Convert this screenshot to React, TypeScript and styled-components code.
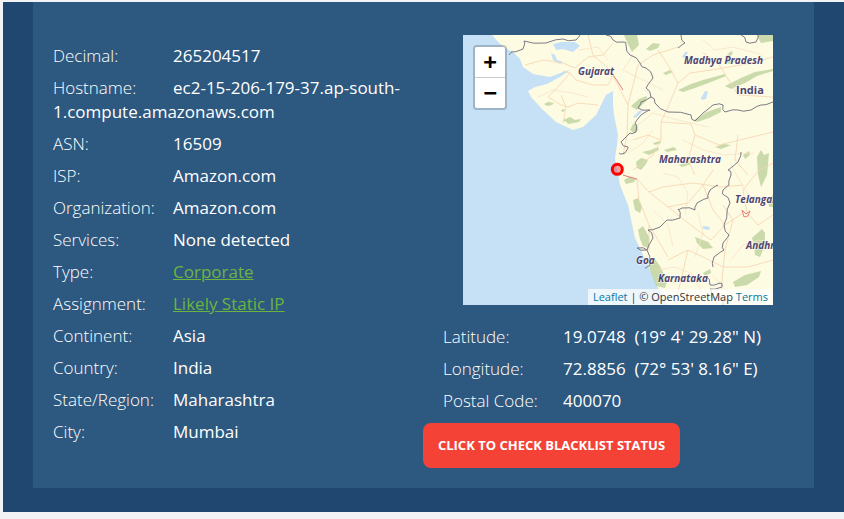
import styled, { createGlobalStyle } from 'styled-components';

const GlobalStyle = createGlobalStyle`
  html, body {
    margin: 0;
    padding: 0;
    background: #f2f3f5;
    overflow: hidden;
  }
`;

type Detail = { label: string; value: string; link?: boolean };

const leftRows: Detail[] = [
    { label: 'Decimal:', value: '265204517' },
    { label: 'Hostname:', value: 'ec2-15-206-179-37.ap-south-1.compute.amazonaws.com' },
    { label: 'ASN:', value: '16509' },
    { label: 'ISP:', value: 'Amazon.com' },
    { label: 'Organization:', value: 'Amazon.com' },
    { label: 'Services:', value: 'None detected' },
    { label: 'Type:', value: 'Corporate', link: true },
    { label: 'Assignment:', value: 'Likely Static IP', link: true },
    { label: 'Continent:', value: 'Asia' },
    { label: 'Country:', value: 'India' },
    { label: 'State/Region:', value: 'Maharashtra' },
    { label: 'City:', value: 'Mumbai' },
];

const rightRows: Detail[] = [
    { label: 'Latitude:', value: '19.0748\u00a0\u00a0(19° 4\' 29.28" N)' },
    { label: 'Longitude:', value: '72.8856\u00a0\u00a0(72° 53\' 8.16" E)' },
    { label: 'Postal Code:', value: '400070' },
];

// Everything below is in map pixels, 0,0 is the top left of the 310x270 tile area
const LAND =
    '29,0 36,8 46,15 50,17 57,24 60,32 70,39 87,42 100,37 107,35 97,42 84,49 72,52 65,56 68,62 80,75 93,87 110,95 120,92 133,80 138,70 143,60 150,56 150,70 151,80 155,100 154,110 152,123 154,134 157,150 165,170 172,203 185,230 195,253 205,270 310,270 310,0';

const WATER = [
    '90,9 98,7 112,7 117,11 110,17 100,14 93,15',
    '88,18 92,20 94,25 100,27 97,29 90,25',
    '238,63 242,56 245,57 243,64 239,65',
    '170,82 176,76 180,75 177,79 172,83',
    '219,22 222,17 225,17 222,23',
    '240,191 247,192 246,195 240,194',
];

const FOREST = [
    '100,85 107,82 112,85 118,84 116,87 106,89',
    '81,69 85,67 91,68 89,70 84,71',
    '98,75 101,74 102,76 99,77',
    '215,55 228,49 240,45 262,39 263,41 248,47 232,53 220,57',
    '262,51 278,43 292,37 310,34 310,36 294,41 282,48 268,54',
    '231,85 244,77 258,72 258,77 246,83 234,87',
    '183,14 190,8 197,9 195,13 187,16',
    '168,71 176,64 184,61 183,66 174,75',
    '167,95 170,89 174,89 175,95 171,98',
    '173,127 178,123 185,125 183,129 178,135 174,133',
    '161,145 166,142 173,144 171,147 163,149',
    '170,165 175,163 179,172 177,178 172,175',
    '175,195 180,191 186,202 186,213 180,211 177,204',
    '185,227 191,223 197,231 204,246 202,253 193,251 188,238',
    '289,203 299,194 302,198 302,210 297,222 292,220 291,210',
    '270,247 282,240 298,236 296,242 284,250 272,252',
    '179,117 188,115 195,112 196,115 186,120',
    '252,112 261,109 268,110 258,114',
    '201,115 211,112 214,115 204,117',
    '294,122 298,115 301,120 306,118 304,140 298,152 295,140',
    '262,27 271,23 274,26 266,29',
    '294,0 310,0 310,6 298,8',
    '161,0 174,0 176,10 169,17 165,9',
    '232,202 245,207 250,213 240,214 234,208',
    '200,38 207,35 210,37 203,40',
    '190,108 197,106 198,108 192,110',
    '216,130 226,127 228,129 219,132',
    '262,22 268,16 270,18 265,24',
    '240,238 247,234 248,238 242,241',
    '305,165 310,160 310,172 306,172',
    '280,120 286,116 287,120 282,124',
];

const ROADS = [
    '100,36 107,38 113,45 130,50 145,50 150,40',
    '107,38 95,52 85,62 98,70 105,72 115,68 135,70',
    '98,60 103,72 100,88',
    '62,30 80,25 100,28 112,33 125,22 140,20 150,8',
    '125,0 130,20 145,33 155,50 165,70 164,100 160,120',
    '165,70 170,50 175,30 190,20 215,12',
    '215,48 227,38 248,35 290,28 310,22',
    '215,48 205,72 198,87 198,105 190,120 170,135',
    '198,87 228,89 232,100 256,110 310,97',
    '215,48 205,30 195,15',
    '160,140 174,144 186,157 205,172 225,168 240,150 250,135',
    '174,144 176,165 186,190 186,215',
    '186,157 200,152 230,148 258,152 280,150',
    '205,172 225,188 248,205 262,190 280,178',
    '240,150 250,175 262,190',
    '205,225 225,215 240,222 260,232 285,232 310,225',
    '225,215 218,245 212,268',
    '260,170 270,185 262,215 258,255',
    '284,178 295,190 310,180',
    '284,178 280,155 296,135 310,128',
    '240,18 255,28 275,60 310,62',
    '170,105 185,100 198,105',
    '232,100 225,125 232,140',
    '275,100 272,125 285,140',
    '205,222 195,205 186,190',
];

const FINE_ROADS = [
    '75,62 90,55 110,58 125,62',
    '115,15 135,12 145,25',
    '175,90 190,78 215,85 245,92',
    '165,118 180,108 190,95',
    '220,105 240,115 262,120 290,118',
    '200,138 215,142 225,158 222,180',
    '190,175 205,190 210,212',
    '235,178 240,198 232,222',
    '195,235 212,232 228,238 240,258',
    '268,225 280,210 295,205 310,208',
    '268,130 285,160 300,165',
    '250,240 262,255 280,262',
    '240,5 252,15 270,12 300,20',
    '170,20 160,35 180,45 200,55',
];

const HIGHWAYS = ['150,40 155,47 160,55', '160,140 166,142 174,144', '279,175 283,179 287,176 285,181 281,182 279,175'];

const BORDERS = [
    '46,20 48,17 60,14 61,6 83,8 100,4 113,5 117,0',
    '143,0 150,5 160,7 163,10 167,20 177,28 183,33 190,43 183,53 188,62 178,67 175,73 187,75 178,80 172,88 173,97 167,98 158,107 165,112 162,118 156,118',
    '188,62 192,68 205,77 228,80 232,86 240,78 250,70 260,70 262,77 275,75 288,75 298,70 310,67',
    '215,13 222,8 218,0',
    '278,0 283,7 293,7 295,0',
    '278,117 275,127 265,135 268,140 266,150 260,155 261,160 267,168 264,178 261,190 266,200 260,208 261,215 251,222 250,232',
    '255,150 247,155 245,163 234,168 232,175 219,173 215,174 217,183 204,185 197,192 185,195 190,203 184,215 174,213 184,215 187,230 182,233',
    '243,241 247,250 257,248 259,252 247,254 248,262 258,262 260,270',
];

// State lines are crooked in the tiles, so every long stretch gets a small kink
function kink(points: string): string {
    const pts = points.split(' ').map((p) => p.split(',').map(Number));
    const out: string[] = [];
    pts.forEach(([x, y], i) => {
        out.push(`${x},${y}`);
        const next = pts[i + 1];
        if (!next) return;
        const side = i % 2 === 0 ? 1.2 : -1.2;
        out.push(`${(x + next[0]) / 2 + side},${(y + next[1]) / 2 - side}`);
    });
    return out.join(' ');
}

type MapLabel = { x: number; y: number; text: string; italic?: boolean; size?: number };

const MAP_LABELS: MapLabel[] = [
    { x: 115, y: 40, text: 'Gujarat', italic: true },
    { x: 221, y: 29, text: 'Madhya Pradesh', italic: true },
    { x: 273, y: 59, text: 'India', size: 11 },
    { x: 196, y: 128, text: 'Maharashtra', italic: true },
    { x: 272, y: 168, text: 'Telangana', italic: true },
    { x: 283, y: 214, text: 'Andhra', italic: true },
    { x: 173, y: 229, text: 'Goa', italic: true },
    { x: 195, y: 247, text: 'Karnataka', italic: true },
];

function MapPicture() {
    return (
        <MapSvg viewBox="0 0 310 270" width={310} height={270}>
            <defs>
                <filter id="tile-blur" x="0" y="0" width="100%" height="100%">
                    <feGaussianBlur stdDeviation="0.45" />
                </filter>
            </defs>
            <g filter="url(#tile-blur)">
                <polygon points={LAND} fill="#fdfbe2" />
                {WATER.map((p) => (
                    <polygon key={p} points={p} fill="#c6e0f6" />
                ))}
                {FOREST.map((p) => (
                    <polygon key={p} points={p} fill="#bdd29c" fillOpacity={0.8} />
                ))}
                {FINE_ROADS.map((p) => (
                    <polyline key={p} points={p} fill="none" stroke="#f8e0c4" strokeWidth={0.7} />
                ))}
                {ROADS.map((p) => (
                    <polyline key={p} points={p} fill="none" stroke="#f7d3ae" strokeWidth={0.8} />
                ))}
                {HIGHWAYS.map((p) => (
                    <polyline key={p} points={p} fill="none" stroke="#ec7f7a" strokeWidth={1} />
                ))}
                {BORDERS.map((p) => (
                    <polyline key={p} points={kink(p)} fill="none" stroke="#6f6b7e" strokeWidth={0.9} />
                ))}
            </g>
            {MAP_LABELS.map((l) => (
                <MapText key={l.text} x={l.x} y={l.y} $italic={l.italic} $size={l.size ?? 10}>
                    {l.text}
                </MapText>
            ))}
            <circle cx={154.3} cy={134.3} r={5} fill="#ff0000" fillOpacity={0.35} stroke="#ff0000" strokeWidth={3} />
        </MapSvg>
    );
}

function Row({ label, value, link }: Detail) {
    return (
        <InfoRow>
            <Label>{label}</Label>
            {link ? <ValueLink href="#">{value}</ValueLink> : <Value>{value}</Value>}
        </InfoRow>
    );
}

export default function App() {
    return (
        <>
            <GlobalStyle />
            <Outer>
                <Inner>
                    <LeftColumn>
                        {leftRows.map((r) => (
                            <Row key={r.label} {...r} />
                        ))}
                    </LeftColumn>
                    <RightColumn>
                        <MapFrame>
                            <MapPicture />
                            <ZoomControl>
                                <ZoomButton>+</ZoomButton>
                                <ZoomButton>−</ZoomButton>
                            </ZoomControl>
                            <Attribution>
                                <AttrLink>Leaflet</AttrLink> | © OpenStreetMap <AttrLink>Terms</AttrLink>
                            </Attribution>
                        </MapFrame>
                        <RightRows>
                            {rightRows.map((r) => (
                                <Row key={r.label} {...r} />
                            ))}
                        </RightRows>
                        <BlacklistButton>Click to check blacklist status</BlacklistButton>
                    </RightColumn>
                </Inner>
            </Outer>
        </>
    );
}

const Outer = styled.div`
  margin: 2px 0 0 3px;
  padding: 0 30px 24px;
  background: #20476f;
  font-family: 'Open Sans', sans-serif;
  font-size: 17px;
  line-height: 24px;
  color: #fff;
`;

const Inner = styled.div`
  display: grid;
  grid-template-columns: 390px 390px;
  padding-bottom: 20px;
  background: #2d587f;
`;

const LeftColumn = styled.div`
  padding: 38px 20px 0;
`;

const RightColumn = styled.div`
  padding-top: 33px;
`;

const InfoRow = styled.div`
  padding: 4px 0;
`;

const Label = styled.span`
  display: inline-block;
  width: 120px;
  font-weight: 300;
`;

const Value = styled.span`
  font-weight: 500;
`;

const ValueLink = styled.a`
  color: #6cb43f;
  font-weight: 500;
  text-decoration: underline;
`;

const MapFrame = styled.div`
  position: relative;
  width: 310px;
  height: 270px;
  margin: 0 auto;
  overflow: hidden;
  background: #c6e0f6;
`;

const MapSvg = styled.svg`
  display: block;
`;

const MapText = styled.text<{ $italic?: boolean; $size: number }>`
  font-family: 'Open Sans', sans-serif;
  font-weight: 700;
  font-style: ${(p) => (p.$italic ? 'italic' : 'normal')};
  font-size: ${(p) => p.$size}px;
  fill: #50466e;
  stroke: rgba(255, 255, 255, 0.6);
  stroke-width: 1.5px;
  paint-order: stroke;
`;

const ZoomControl = styled.div`
  position: absolute;
  top: 10px;
  left: 10px;
  border: 2px solid rgba(0, 0, 0, 0.2);
  border-radius: 4px;
  background-clip: padding-box;
`;

const ZoomButton = styled.div`
  width: 30px;
  height: 30px;
  background: #fff;
  color: #000;
  font-family: 'DejaVu Sans Mono', monospace;
  font-size: 22px;
  font-weight: 700;
  line-height: 30px;
  text-align: center;

  &:first-child {
    border-bottom: 1px solid #ccc;
    border-radius: 2px 2px 0 0;
  }

  &:last-child {
    border-radius: 0 0 2px 2px;
  }
`;

const Attribution = styled.div`
  position: absolute;
  right: 0;
  bottom: 0;
  padding: 0 5px;
  background: rgba(255, 255, 255, 0.7);
  color: #333;
  font-size: 11px;
  line-height: 16px;
  white-space: nowrap;
`;

const AttrLink = styled.span`
  color: #0078a8;
`;

const RightRows = styled.div`
  margin-top: 16px;
  padding: 0 20px;
`;

const BlacklistButton = styled.button`
  display: block;
  width: 257px;
  height: 45px;
  margin-top: 6px;
  padding: 0 0 1px;
  border: none;
  border-radius: 8px;
  background: #f44336;
  color: #fff;
  font-family: 'Open Sans', sans-serif;
  font-size: 13px;
  font-weight: 700;
  text-transform: uppercase;
`;
